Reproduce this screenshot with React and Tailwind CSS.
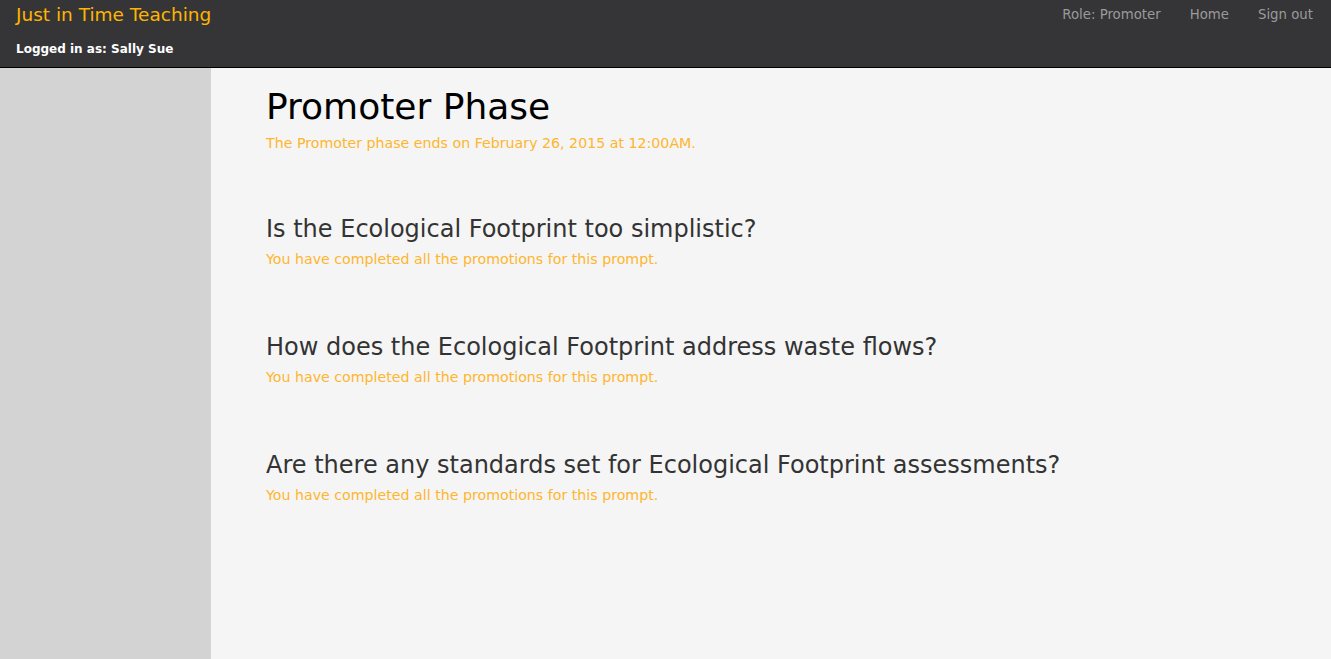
export default function App() {
  const prompts = [
    "Is the Ecological Footprint too simplistic?",
    "How does the Ecological Footprint address waste flows?",
    "Are there any standards set for Ecological Footprint assessments?",
  ];
  return (
    <div className="h-[659px] flex flex-col bg-[#f5f5f5]" style={{ fontFamily: '"DejaVu Sans", Verdana, sans-serif' }}>
      <header className="h-[68px] shrink-0 bg-[#353537] border-b border-black flex justify-between px-4">
        <div className="flex flex-col">
          <div className="text-[18.5px] text-[#ffb400] leading-none pt-[6px]">Just in Time Teaching</div>
          <div className="text-[12px] font-bold text-white leading-none pt-[18px]">Logged in as: Sally Sue</div>
        </div>
        <nav className="flex gap-[29px] text-[13.3px] text-[#9a9a9a] pt-[8px] leading-none pr-[2px]">
          <span>Role: Promoter</span>
          <span>Home</span>
          <span>Sign out</span>
        </nav>
      </header>
      <div className="flex flex-1">
        <aside className="w-[211px] bg-[#d3d3d3] shrink-0" />
        <main className="pl-[55px] pt-[18px]">
          <h1 className="text-[36px] text-black leading-[42px]">Promoter Phase</h1>
          <p className="text-[14.2px] text-[#ffb52e] leading-[18px] mt-[6px]">
            The Promoter phase ends on February 26, 2015 at 12:00AM.
          </p>
          <div className="mt-[55px] flex flex-col gap-[57px]">
            {prompts.map((p) => (
              <div key={p}>
                <h2 className="text-[24px] text-[#333333] leading-[28px] pt-[8px]">{p}</h2>
                <p className="text-[14.2px] text-[#ffb52e] leading-[18px] mt-[7px]">
                  You have completed all the promotions for this prompt.
                </p>
              </div>
            ))}
          </div>
        </main>
      </div>
    </div>
  );
}
